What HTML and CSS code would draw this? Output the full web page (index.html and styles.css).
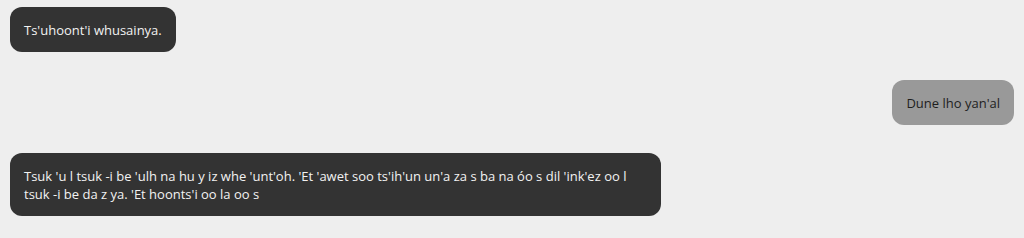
FILE: index.html
```html
<!DOCTYPE html>
<html lang="en">
<head>
  <meta charset="UTF-8">
  <title>Chat</title>
  <link rel="stylesheet" href="styles.css">
</head>
<body>
  <div class="chat">
    <div class="msg them">Ts'uhoont'i whusainya.</div>
    <div class="msg me">Dune lho yan'al</div>
    <div class="msg them">Tsuk 'u l tsuk -i be 'ulh na hu y iz whe 'unt'oh. 'Et 'awet soo ts'ih'un un'a za s ba na óo s dil 'ink'ez oo l tsuk -i be da z ya. 'Et hoonts'i oo la oo s</div>
  </div>
</body>
</html>
```

FILE: styles.css
```css
body {
  margin: 0;
  background-color: #eeeeee;
  font-family: "Open Sans", "Noto Sans", sans-serif;
  font-size: 13px;
}
.chat {
  display: flex;
  flex-direction: column;
  gap: 28px;
  padding: 7px 10px;
}
.msg {
  max-width: 651px;
  box-sizing: border-box;
  padding: 14px 14px 13px;
  line-height: 18px;
  border-radius: 12px;
}
.them {
  align-self: flex-start;
  background: #333333;
  color: #f2f2f2;
}
.me {
  align-self: flex-end;
  background: #999999;
  color: #1e1e1e;
}
```
